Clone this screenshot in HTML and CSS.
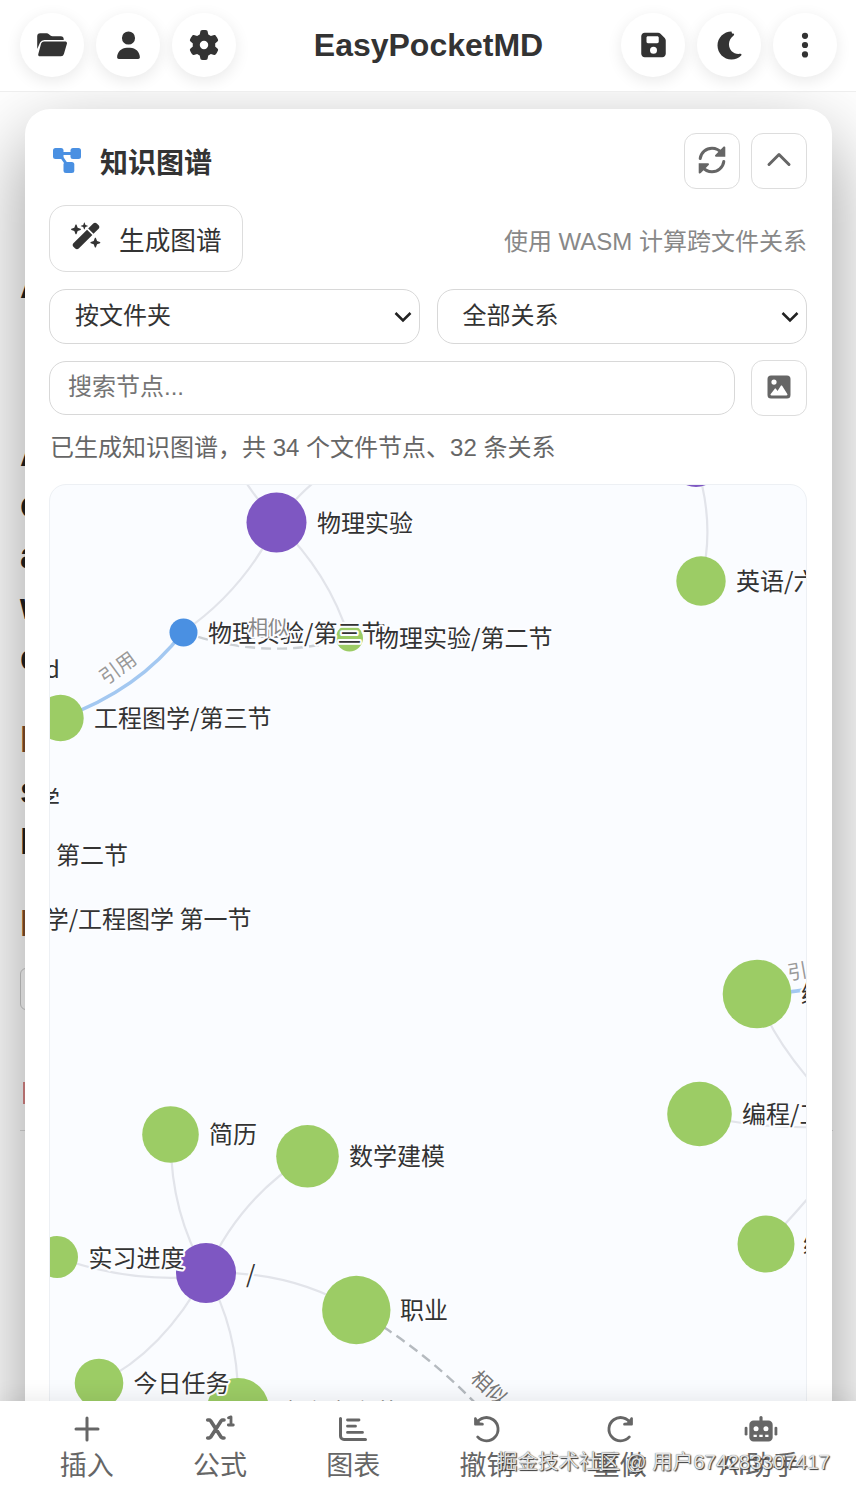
FILE: index.html
```html
<!DOCTYPE html>
<html lang="zh-CN">
<head>
    <meta charset="UTF-8">
    <meta name="viewport" content="width=device-width, initial-scale=1.0">
    <title>EasyPocketMD</title>
    <link rel="stylesheet" href="styles.css">
</head>
<body>
    <header class="top-bar">
        <div class="bar-group">
            <button class="round-btn" aria-label="文件">
                <svg width="30" height="24" viewBox="0 0 30 24"><path d="M.200 16V3.300A3 3 0 0 1 3.200.300h6.400c.9 0 1.700.3 2.300.9l1.500 1.300c.6.500 1.300.8 2.100.8h8.200A3 3 0 0 1 26.700 6.300v.700H7.400A5 5 0 0 0 3.100 9.500zM4.200 10.300A3.200 3.200 0 0 1 7 8.600h21.200c1.300 0 2.100 1 1.700 2.200l-3 10.300A3 3 0 0 1 24 23.300H3c-1.300 0-2-1-1.700-2.200z"/></svg>
            </button>
            <button class="round-btn" aria-label="用户">
                <svg width="25" height="28" viewBox="0 0 448 512"><path d="M224 248A120 120 0 1 0 224 8a120 120 0 1 0 0 240zm-30 56C95 304 16 383 16 482c0 16 13 30 30 30H402c17 0 30-14 30-30C432 383 353 304 254 304H194z"/></svg>
            </button>
            <button class="round-btn" aria-label="设置">
                <svg width="30" height="30" viewBox="0 0 512 512"><path d="M495.9 166.6c3.2 8.7 .5 18.4-6.4 24.6l-43.3 39.4c1.1 8.3 1.7 16.8 1.7 25.4s-.6 17.1-1.7 25.4l43.3 39.4c6.9 6.2 9.6 15.9 6.4 24.6c-4.4 11.9-9.7 23.3-15.8 34.3l-4.7 8.1c-6.6 11-14 21.4-22.1 31.2c-5.9 7.2-15.7 9.6-24.5 6.8l-55.7-17.7c-13.4 10.3-28.2 18.9-44 25.4l-12.5 57.1c-2 9.1-9 16.3-18.2 17.8c-13.8 2.3-28 3.5-42.5 3.5s-28.7-1.2-42.5-3.5c-9.2-1.5-16.2-8.7-18.2-17.8l-12.5-57.1c-15.8-6.5-30.6-15.1-44-25.4L83.1 425.9c-8.8 2.8-18.6 .3-24.5-6.8c-8.1-9.8-15.5-20.2-22.1-31.2l-4.7-8.1c-6.1-11-11.4-22.4-15.8-34.3c-3.2-8.7-.5-18.4 6.4-24.6l43.3-39.4C64.6 273.1 64 264.6 64 256s.6-17.1 1.7-25.4L22.4 191.2c-6.9-6.2-9.6-15.9-6.4-24.6c4.4-11.9 9.7-23.3 15.8-34.3l4.7-8.1c6.6-11 14-21.4 22.1-31.2c5.9-7.2 15.7-9.6 24.5-6.8l55.7 17.7c13.4-10.3 28.2-18.9 44-25.4l12.5-57.1c2-9.1 9-16.3 18.2-17.8C227.3 1.2 241.5 0 256 0s28.7 1.2 42.5 3.5c9.2 1.5 16.2 8.7 18.2 17.8l12.5 57.1c15.8 6.5 30.6 15.1 44 25.4l55.7-17.7c8.8-2.8 18.6-.3 24.5 6.8c8.1 9.8 15.5 20.2 22.1 31.2l4.7 8.1c6.1 11 11.4 22.4 15.8 34.3zM256 328a72 72 0 1 0 0-144 72 72 0 1 0 0 144z"/></svg>
            </button>
        </div>
        <h1 class="app-title">EasyPocketMD</h1>
        <div class="bar-group">
            <button class="round-btn" aria-label="保存">
                <svg width="25" height="28" viewBox="0 0 448 512"><path d="M64 32C28.7 32 0 60.7 0 96V416c0 35.3 28.7 64 64 64H384c35.3 0 64-28.7 64-64V173.3c0-17-6.7-33.3-18.7-45.3L352 50.7C340 38.7 323.7 32 306.7 32H64zm32 90c0-15 11-26 26-26H292c15 0 28 11 28 26v76c0 15-13 26-28 26H122c-15 0-26-11-26-26V122zM224 288a64 64 0 1 1 0 128 64 64 0 1 1 0-128z"/></svg>
            </button>
            <button class="round-btn" aria-label="深色模式">
                <svg width="25" height="32" viewBox="0 0 384 512"><path d="M223.5 32C100 32 0 132.3 0 256S100 480 223.5 480c60.6 0 115.500-24.2 155.800-63.4c5-4.9 6.3-12.5 3.1-18.7s-10.1-9.7-17-8.500c-9.8 1.7-19.8 2.6-30.1 2.6c-86 0-152-68-152-156c0-62 31-108 75-142c6.1-5 9.200-10.500 7.700-17.300s-7.3-11.9-14.300-12.500c-6.300-.5-12.600-.8-19-.8z" transform="translate(0 8)"/></svg>
            </button>
            <button class="round-btn" aria-label="更多">
                <svg width="8" height="28" viewBox="0 0 8 28"><circle cx="4" cy="4.8" r="3.1"/><circle cx="4" cy="14" r="3.1"/><circle cx="4" cy="23.4" r="3.1"/></svg>
            </button>
        </div>
    </header>

    <main class="workspace">
        <!-- editor text under the panel -->
        <div class="editor" aria-hidden="true">
            <p class="line line-title">A</p>
            <p class="line line-gap">A</p>
            <p class="line">c</p>
            <p class="line">a</p>
            <p class="line">w</p>
            <p class="line">e</p>
            <p class="line line-code">I</p>
            <p class="line">s</p>
            <p class="line">I</p>
            <p class="line line-code">I</p>
            <div class="quote-box"></div>
            <div class="pink-mark"></div>
            <hr class="rule">
        </div>

        <section class="graph-panel">
            <div class="panel-head">
                <svg class="head-icon" width="28" height="26" viewBox="0 0 28 26"><path class="link" d="M6 5.500h16M6.500 6 15.500 19"/><rect x="0" y="0" width="10.500" height="11" rx="2.500"/><rect x="17.500" y="0" width="10.500" height="11" rx="2.500"/><rect x="10.500" y="14" width="10.800" height="11" rx="2.500"/></svg>
                <h2>知识图谱</h2>
                <button class="icon-btn" aria-label="刷新">
                    <svg width="28" height="28" viewBox="0 0 28 28"><g class="stroke"><path d="M2.200 12.500C3 6.500 8 2.200 14 2.200c4 0 7.500 2 10 5"/><path d="M25.800 15.500C25 21.500 20 25.800 14 25.800c-4 0-7.500-2-10-5"/></g><path d="M27.300 1.500v9.300H18c-1 0-1.300-1-.7-1.700l7.900-8.200c.8-.8 2.100-.5 2.100.6z"/><path d="M.700 26.500v-9.300H10c1 0 1.300 1 .7 1.700l-7.900 8.200c-.8.800-2.100.5-2.100-.6z"/></svg>
                </button>
                <button class="icon-btn" aria-label="收起">
                    <svg width="26" height="26" viewBox="0 0 26 26"><path class="stroke" d="M3 17.500 13 7.500 23 17.500"/></svg>
                </button>
            </div>

            <div class="panel-actions">
                <button class="generate-btn">
                    <svg width="30" height="28" viewBox="0 0 576 512"><path d="M46.100 395.400c-18.700 18.700-18.700 49.100 0 67.900l34.600 34.600c18.700 18.700 49.100 18.700 67.900 0L410 236 308 134zM330 112l102 102 98-97.500c18.700-18.700 18.700-49.100 0-67.900L495.300 14.100c-18.700-18.700-49.100-18.700-67.900 0zM234.700 42.700L192 58c-4 2-4 10 0 12l42.700 15.300L250 128c2 4 10 4 12 0l15.300-42.700L320 70c4-2 4-10 0-12l-42.700-15.300L262 0c-2-4-10-4-12 0zM7.500 117.200c-8 3-8 18 0 21.600L64 160l21.200 56.500c3 8 18 8 21.600 0L128 160l56.500-21.200c8-3 8-18 0-21.600L128 96 106.800 39.500c-3-8-18-8-21.600 0L64 96zM379.500 373.200c-8 3-8 18 0 21.600L436 416l21.200 56.500c3 8 18 8 21.600 0L500 416l56.500-21.200c8-3 8-18 0-21.600L500 352l-21.200-56.500c-3-8-18-8-21.600 0L436 352z"/></svg>
                    <span>生成图谱</span>
                </button>
                <span class="hint">使用 WASM 计算跨文件关系</span>
            </div>

            <div class="filters">
                <div class="select-box">
                    <span>按文件夹</span>
                    <svg width="18" height="12" viewBox="0 0 18 12"><path d="M1.500 2 9 9.500 16.500 2"/></svg>
                </div>
                <div class="select-box">
                    <span>全部关系</span>
                    <svg width="18" height="12" viewBox="0 0 18 12"><path d="M1.500 2 9 9.500 16.500 2"/></svg>
                </div>
            </div>

            <div class="search-row">
                <input class="search-input" type="text" placeholder="搜索节点...">
                <button class="icon-btn" aria-label="导出图片">
                    <svg width="24" height="24" viewBox="0 0 24 24"><path fill-rule="evenodd" d="M4 .500h16A3.500 3.500 0 0 1 23.500 4v16a3.500 3.500 0 0 1-3.500 3.500H4A3.500 3.500 0 0 1 .500 20V4A3.500 3.500 0 0 1 4 .500zM7 4.500a2.600 2.600 0 1 0 0 5.200 2.600 2.600 0 0 0 0-5.200zM4.500 20.500h15c.8 0 1.200-.7.800-1.400l-5-8.200c-.4-.6-1.200-.6-1.600 0l-3.200 5-1.400-2c-.4-.5-1.100-.5-1.500 0l-3.900 5.200c-.5.700-.1 1.400.8 1.400z"/></svg>
                </button>
            </div>

            <p class="status">已生成知识图谱，共 34 个文件节点、32 条关系</p>

            <div class="graph-canvas">
                <svg class="graph" viewBox="50 485 757 940" width="757" height="940">
                    <!-- folder edges -->
                    <g class="edge">
                        <path d="M247 484Q262 506 277 523"/>
                        <path d="M312 484Q294 499 277 523"/>
                        <path d="M277 523Q243 591 183 632"/>
                        <path d="M277 523Q329 573 349 638"/>
                        <path d="M696 463Q716 525 701 581"/>
                        <path d="M757 994Q772 1039 820 1092"/>
                        <path d="M700 1114Q750 1129 820 1127"/>
                        <path d="M766 1244Q790 1220 820 1184"/>
                        <path d="M171 1134Q169 1210 206 1273"/>
                        <path d="M308 1156Q240 1197 206 1273"/>
                        <path d="M57 1257Q130 1284 206 1276"/>
                        <path d="M206 1273Q290 1270 356 1310"/>
                        <path d="M206 1273Q163 1352 99 1383"/>
                        <path d="M206 1273Q240 1332 238 1408"/>
                    </g>
                    <path class="edge-ref" d="M61 718Q139 690 183 632"/>
                    <path class="edge-ref" d="M757 994Q790 993 815 988"/>
                    <path class="edge-similar" d="M183 632Q268 662 349 638"/>
                    <path class="edge-similar dark" d="M356 1310Q425 1350 480 1408"/>

                    <g class="node-folder">
                        <circle cx="276.500" cy="522.500" r="30"/>
                        <circle cx="696" cy="463" r="24"/>
                        <circle cx="206" cy="1273" r="30"/>
                    </g>
                    <g class="node-file">
                        <circle cx="701" cy="581" r="24.700"/>
                        <circle cx="349.500" cy="638" r="13.500"/>
                        <circle cx="60.500" cy="718" r="23.200"/>
                        <circle cx="757" cy="994" r="34.300"/>
                        <circle cx="699.500" cy="1114" r="32.300"/>
                        <circle cx="766" cy="1244" r="28.500"/>
                        <circle cx="170.500" cy="1134.500" r="28.300"/>
                        <circle cx="307.500" cy="1156.300" r="31.300"/>
                        <circle cx="57" cy="1257" r="21"/>
                        <circle cx="356.300" cy="1310" r="34.200"/>
                        <circle cx="99" cy="1383" r="24.300"/>
                        <circle cx="238" cy="1409" r="31"/>
                    </g>
                    <circle class="node-current" cx="183.500" cy="632.500" r="14"/>

                    <g class="label">
                        <text x="317" y="531.500">物理实验</text>
                        <text x="736" y="589.500">英语/六级</text>
                        <text x="208" y="641.500">物理实验/第三节</text>
                        <text x="375" y="646.500">物理实验/第二节</text>
                        <text x="60" y="678" text-anchor="end">README.md</text>
                        <text x="94" y="727">工程图学/第三节</text>
                        <text x="60" y="808" text-anchor="end">工程图学</text>
                        <text x="128" y="864" text-anchor="end">工程图学 第二节</text>
                        <text x="251.500" y="928" text-anchor="end">工程图学/工程图学 第一节</text>
                        <text x="801" y="1003">编程</text>
                        <text x="742" y="1123">编程/工具</text>
                        <text x="803" y="1253">编程</text>
                        <text x="209" y="1143">简历</text>
                        <text x="349" y="1165">数学建模</text>
                        <text x="88.500" y="1266.500">实习进度</text>
                        <text x="246" y="1283">/</text>
                        <text x="400" y="1319">职业</text>
                        <text x="133.500" y="1392">今日任务</text>
                        <text x="279" y="1421">文字文字节</text>
                    </g>
                    <g class="edge-label">
                        <text class="mid" x="268" y="635">相似</text>
                        <text transform="translate(118 668) rotate(-36)" y="7">引用</text>
                        <text transform="translate(807 969) rotate(-10)" y="8">引用</text>
                        <text class="dark" transform="translate(489 1388) rotate(43)" y="7">相似</text>
                    </g>
                </svg>
            </div>
        </section>
    </main>

    <nav class="bottom-bar">
        <button class="tool"><svg width="28" height="28" viewBox="0 0 28 28"><path class="stroke" d="M14 3v22M3 14h22"/></svg><span>插入</span></button>
        <button class="tool"><svg width="30" height="28" viewBox="0 0 30 28"><path class="stroke bold" d="M2.700 5h1.500c.7 0 1 .3 1.400.8L16.200 22.200c.4.500.8.800 1.400.8H19M2.700 23h1.500c.7 0 1-.3 1.400-.8L16.200 5.800c.4-.5.8-.8 1.400-.8H19"/><path class="stroke thin" d="M23.500 2.800 26 1.900V9.500M23.300 10h5"/></svg><span>公式</span></button>
        <button class="tool"><svg width="30" height="28" viewBox="0 0 30 28"><path class="stroke" d="M2.500 3.500V21a3.500 3.500 0 0 0 3.500 3.500h21.500"/><path class="stroke thin" d="M9.500 5h11.500M9.500 11.200h8M9.500 17.400h15"/></svg><span>图表</span></button>
        <button class="tool"><svg width="30" height="30" viewBox="0 0 30 30"><path class="stroke" d="M3.500 9A12.500 12.500 0 1 1 5 23.500"/><path d="M1.200 3.500c0-1.600 2.700-1.600 2.700 0l3.500 4.500 2.800.2c1.800.2 1.800 3 0 3.100H2.700c-1 0-1.500-.5-1.500-1.500z"/></svg><span>撤销</span></button>
        <button class="tool"><svg width="30" height="30" viewBox="0 0 30 30"><path class="stroke" d="M26.500 9A12.500 12.500 0 1 0 25 23.500"/><path d="M28.800 3.500c0-1.600-2.700-1.600-2.700 0L22.600 8l-2.800.2c-1.800.2-1.800 3 0 3.100h7.500c1 0 1.500-.5 1.500-1.500z"/></svg><span>重做</span></button>
        <button class="tool">
            <svg width="36" height="30" viewBox="0 0 36 30"><path fill-rule="evenodd" d="M18 1c1.100 0 1.700.8 1.700 1.700V6H26a4.500 4.500 0 0 1 4.500 4.500v13.500A4.500 4.500 0 0 1 26 28.500H10a4.500 4.500 0 0 1-4.500-4.500V10.500A4.500 4.500 0 0 1 10 6h6.300V2.700C16.300 1.800 16.900 1 18 1zM12.700 12a2.700 2.700 0 1 0 0 5.400 2.700 2.700 0 0 0 0-5.400zm10.600 0a2.700 2.700 0 1 0 0 5.400 2.700 2.700 0 0 0 0-5.400zM10 21.200v2.400h3.500v-2.400zm6.200 0v2.400h3.600v-2.400zm6.300 0v2.400H26v-2.400z"/><rect x=".5" y="12.500" width="3" height="9.500" rx="1.500"/><rect x="32.500" y="12.500" width="3" height="9.500" rx="1.500"/></svg>
            <span class="ai-label">AI助手</span>
        </button>
    </nav>
    <div class="watermark">掘金技术社区 @ 用户674283307417</div>
</body>
</html>
```
FILE: styles.css
```css
* {
    box-sizing: border-box;
}

body {
    margin: 0;
    height: 1500px;
    display: flex;
    flex-direction: column;
    overflow: hidden;
    position: relative;
    background-color: #fff;
    color: #333;
    font-family: 'Liberation Sans', 'Noto Sans CJK SC', sans-serif;
}

h1, h2, p {
    margin: 0;
}

button {
    font-family: inherit;
    color: inherit;
    padding: 0;
    border: none;
    background: none;
}

svg {
    display: block;
    fill: currentColor;
}

.stroke {
    fill: none;
    stroke: currentColor;
    stroke-width: 3;
    stroke-linecap: round;
    stroke-linejoin: round;
}

/* top bar */
.top-bar {
    height: 92px;
    flex: none;
    display: flex;
    align-items: center;
    justify-content: space-between;
    padding: 0 19px 2px 20px;
    background-color: #fff;
    border-bottom: 1px solid #eee;
    position: relative;
    z-index: 2;
}

.bar-group {
    display: flex;
    gap: 12px;
}

.round-btn {
    width: 64px;
    height: 64px;
    border-radius: 50%;
    background-color: #fff;
    display: flex;
    align-items: center;
    justify-content: center;
    box-shadow: 0 4px 16px rgba(0, 0, 0, 0.09);
}

.app-title {
    font-size: 32px;
    line-height: 40px;
}

/* workspace */
.workspace {
    flex: 1;
    min-height: 0;
    position: relative;
    overflow: hidden;
    padding: 17px 24px 0 25px;
}

.editor {
    position: absolute;
    left: 20px;
    top: 2px;
    width: 813px;
    color: #222;
    font-size: 36px;
    font-weight: bold;
}

.line {
    height: 51px;
    line-height: 51px;
}

.line-title {
    margin: 166px 0 0;
}

.line-gap {
    margin-top: 117px;
}

.line-code {
    margin-top: 31px;
    color: #84502c;
}

.quote-box {
    width: 200px;
    height: 42px;
    margin-top: 19px;
    border: 1px solid #ccc;
    border-radius: 6px;
}

.pink-mark {
    width: 2px;
    height: 22px;
    margin: 72px 0 0 3px;
    background-color: #d88;
}

.rule {
    margin: 26px 0 0;
    border: none;
    border-top: 1px solid #ddd;
}

.graph-panel {
    position: relative;
    height: 1360px;
    padding: 24px 25px 0 24px;
    background-color: #fff;
    border-radius: 25px;
    box-shadow: 0 30px 80px rgba(0, 0, 0, 0.4);
}

.panel-head {
    display: flex;
    align-items: center;
    height: 56px;
}

.head-icon {
    margin-left: 4px;
    color: #4a90e2;
}

.head-icon .link {
    fill: none;
    stroke: currentColor;
    stroke-width: 3;
}

.panel-head h2 {
    flex: 1;
    margin: 5px 0 0 19px;
    font-size: 28px;
    line-height: 40px;
}

.icon-btn {
    width: 56px;
    height: 56px;
    flex: none;
    display: flex;
    align-items: center;
    justify-content: center;
    border: 1px solid #ddd;
    border-radius: 12px;
    color: #666;
}

.icon-btn svg {
    margin-top: -3px;
}

.panel-head .icon-btn + .icon-btn {
    margin-left: 11px;
}

.panel-actions {
    display: flex;
    align-items: center;
    justify-content: space-between;
    margin-top: 16px;
}

.generate-btn {
    display: flex;
    align-items: center;
    gap: 18px;
    width: 194px;
    height: 67px;
    padding: 0 0 0 21px;
    border: 1px solid #ddd;
    border-radius: 17px;
    font-size: 25.7px;
}

.generate-btn svg {
    margin-top: -5px;
}

.hint {
    margin-top: 1px;
    font-size: 24px;
    color: #888;
}

.filters {
    display: grid;
    grid-template-columns: 1fr 1fr;
    gap: 17px;
    margin-top: 17px;
}

.select-box {
    display: flex;
    align-items: center;
    justify-content: space-between;
    height: 55px;
    padding: 0 7px 6px 25px;
    border: 1px solid #d8d8d8;
    border-radius: 17px;
    font-size: 24px;
}

.select-box svg {
    margin-top: 7px;
    fill: none;
    stroke: #222;
    stroke-width: 2.5;
}

.search-row {
    display: flex;
    align-items: center;
    gap: 16px;
    margin-top: 16px;
}

.search-input {
    flex: 1;
    min-width: 0;
    height: 54px;
    padding: 0 18px 3px;
    border: 1px solid #d8d8d8;
    border-radius: 17px;
    background-color: #fff;
    font-family: inherit;
    font-size: 24px;
}

.search-input::placeholder {
    color: #757575;
}

.status {
    height: 36px;
    margin: 14px 0 0 1px;
    line-height: 36px;
    font-size: 24px;
    color: #666;
}

/* graph */
.graph-canvas {
    height: 1000px;
    margin-top: 18px;
    overflow: hidden;
    border: 1px solid #edf0f4;
    border-radius: 17px;
    background-color: #fafcff;
}

.edge {
    fill: none;
    stroke: #e2e4ea;
    stroke-width: 2.2;
}

.edge-ref {
    fill: none;
    stroke: #a3c8f1;
    stroke-width: 3.6;
}

.edge-similar {
    fill: none;
    stroke: #ccd0d4;
    stroke-width: 2.4;
    stroke-dasharray: 10 6;
}

.edge-similar.dark {
    stroke: #b5babf;
}

.node-folder {
    fill: #7e57c2;
}

.node-file {
    fill: #9ccc65;
}

.node-current {
    fill: #4a90e2;
}

.label text,
.edge-label text {
    font-family: 'Noto Sans CJK SC', sans-serif;
    font-size: 24px;
    fill: #333;
    stroke: #fcfdff;
    stroke-width: 4px;
    stroke-linejoin: round;
    paint-order: stroke;
}

.edge-label text {
    font-size: 20px;
    fill: #999;
    text-anchor: middle;
}

.edge-label .mid {
    fill: #888;
}

.edge-label .dark {
    fill: #777;
}

/* bottom bar */
.bottom-bar {
    height: 99px;
    flex: none;
    display: grid;
    grid-template-columns: repeat(5, 133.3px) 150px;
    padding: 14px 0 0 20px;
    background-color: #fff;
    box-shadow: 0 -4px 20px rgba(0, 0, 0, 0.08);
    position: relative;
    z-index: 2;
}

.tool {
    display: flex;
    flex-direction: column;
    align-items: center;
    height: 70px;
    font-size: 27px;
    line-height: 38px;
    color: #666;
}

.tool svg {
    height: 30px;
    margin-bottom: 4px;
}

.tool .ai-label {
    margin-right: 4px;
}

.thin {
    stroke-width: 2.8;
}

.bold {
    stroke-width: 3.6;
}

.watermark {
    position: absolute;
    right: 26px;
    bottom: 23px;
    z-index: 3;
    font-size: 20.5px;
    line-height: 30px;
    white-space: nowrap;
    color: #e4e4e4;
    text-shadow: 1px 1px 1px #333, 0 0 1px #555;
}
```
